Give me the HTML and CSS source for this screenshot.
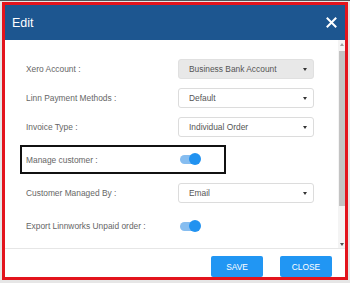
FILE: index.html
```html
<!DOCTYPE html>
<html lang="en">
<head>
    <meta charset="UTF-8">
    <meta name="viewport" content="width=device-width, initial-scale=1.0">
    <title>Edit</title>
    <link rel="stylesheet" href="styles.css">
</head>
<body>
    <div class="modal">
        <div class="modal-header">
            <span class="modal-title">Edit</span>
            <svg class="close-icon" width="11" height="11" viewBox="0 0 11 11">
                <path d="M1.5 1.5 L9.5 9.5 M9.5 1.5 L1.5 9.5" stroke="#fff" stroke-width="2" stroke-linecap="square"/>
            </svg>
        </div>

        <div class="modal-body">
            <div class="form">
                <div class="row">
                    <label>Xero Account :</label>
                    <div class="select disabled"><span>Business Bank Account</span><i class="caret"></i></div>
                </div>
                <div class="row">
                    <label>Linn Payment Methods :</label>
                    <div class="select"><span>Default</span><i class="caret"></i></div>
                </div>
                <div class="row">
                    <label>Invoice Type :</label>
                    <div class="select"><span>Individual Order</span><i class="caret"></i></div>
                </div>
                <div class="row highlight">
                    <label>Manage customer :</label>
                    <div class="toggle"><span class="knob"></span></div>
                </div>
                <div class="row">
                    <label>Customer Managed By :</label>
                    <div class="select"><span>Email</span><i class="caret"></i></div>
                </div>
                <div class="row last">
                    <label>Export Linnworks Unpaid order :</label>
                    <div class="toggle"><span class="knob"></span></div>
                </div>
            </div>
            <div class="scrollbar">
                <i class="arrow up"></i>
                <div class="thumb"></div>
                <i class="arrow down"></i>
            </div>
        </div>

        <div class="modal-footer">
            <button class="btn">SAVE</button>
            <button class="btn">CLOSE</button>
        </div>
    </div>
</body>
</html>
```

FILE: styles.css
```css
* {
    margin: 0;
    padding: 0;
    box-sizing: border-box;
}

body {
    font-family: 'Liberation Sans', Arial, sans-serif;
    width: 350px;
    height: 283px;
    background: #e6e6e6;
    border-top: 1px solid #555;
    padding: 1px 0 0 2px;
    overflow: hidden;
}

.modal {
    width: 346px;
    height: 278px;
    border: 3px solid #e3141d;
    background: #fff;
    display: flex;
    flex-direction: column;
}

.modal-header {
    height: 35px;
    background: #1d5690;
    display: flex;
    align-items: center;
    justify-content: space-between;
    padding: 0 8px 0 7px;
}

.modal-title {
    color: #fff;
    font-size: 12.5px;
}

.close-icon {
    display: block;
}

.modal-body {
    height: 209px;
    display: flex;
    border-bottom: 1px solid #e6e6e6;
}

.form {
    flex: 1;
    padding: 19px 0 0 21px;
}

.row {
    display: flex;
    align-items: center;
    height: 20px;
    margin-bottom: 9px;
}

.row label {
    width: 152px;
    font-size: 8.4px;
    color: #666;
}

.row.highlight {
    height: 29px;
    width: 206px;
    margin: -1px 0 9px -6px;
    padding-left: 4px;
    border: 2px solid #111;
}

.row.last {
    margin-top: 13px;
}

.select {
    width: 136px;
    height: 20px;
    border: 1px solid #dcdcdc;
    border-radius: 3px;
    display: flex;
    align-items: center;
    justify-content: space-between;
    padding: 0 6px 0 10px;
    font-size: 8.4px;
    color: #555;
}

.select.disabled {
    background: #e8e8e8;
    border-color: #e0e0e0;
}

.caret {
    width: 0;
    height: 0;
    border-left: 2px solid transparent;
    border-right: 2px solid transparent;
    border-top: 3px solid #333;
}

.toggle {
    position: relative;
    width: 17px;
    height: 9px;
    margin-left: 2px;
    border-radius: 5px;
    background: #86bdf0;
}

.knob {
    position: absolute;
    right: -4px;
    top: -2px;
    width: 12px;
    height: 12px;
    border-radius: 50%;
    background: #2192f0;
}

.scrollbar {
    width: 7px;
    background: #f4f4f4;
    display: flex;
    flex-direction: column;
    align-items: center;
    padding: 3px 0 2px;
}

.thumb {
    width: 6px;
    height: 155px;
    margin: 5px 0 auto;
    background: #c3c3c3;
}

.arrow {
    width: 0;
    height: 0;
    border-left: 2px solid transparent;
    border-right: 2px solid transparent;
}

.arrow.up {
    border-bottom: 3px solid #a0a0a0;
}

.arrow.down {
    border-top: 3px solid #505050;
}

.modal-footer {
    flex: 1;
    display: flex;
    justify-content: flex-end;
    align-items: flex-end;
    gap: 17px;
    padding-right: 13px;
}

.btn {
    width: 52px;
    height: 21px;
    border: none;
    border-radius: 2px;
    background: #2196f3;
    color: #fff;
    font-family: inherit;
    font-size: 8.4px;
}
```
